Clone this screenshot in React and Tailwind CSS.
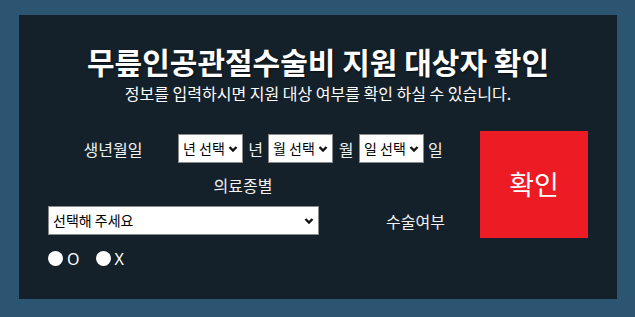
import React, { useState } from 'react';

const Chevron = () => (
    <svg width="10" height="7" viewBox="0 0 10 7" className="pointer-events-none absolute right-[5px] top-1/2 -translate-y-1/2">
        <polyline points="1.5,1.5 5,5 8.5,1.5" fill="none" stroke="#111" strokeWidth="2.4" />
    </svg>
);

const Select = ({ width, value, onChange, options, placeholder }) => (
    <div className={`relative ${width} h-[29px] shrink-0`}>
        <select
            value={value}
            onChange={(e) => onChange(e.target.value)}
            className="w-full h-full appearance-none bg-white text-black text-[14px] pl-[4px] pr-[16px] border border-[#8a8a8a] outline-none rounded-none"
        >
            <option value="">{placeholder}</option>
            {options.map((o) => (
                <option key={o} value={o}>{o}</option>
            ))}
        </select>
        <Chevron />
    </div>
);

const years = Array.from({ length: 60 }, (_, i) => String(2010 - i));
const months = Array.from({ length: 12 }, (_, i) => String(i + 1));
const days = Array.from({ length: 31 }, (_, i) => String(i + 1));

export default function App() {
    const [form, setForm] = useState({ year: '', month: '', day: '', type: '', surgery: '' });

    return (
        <div className="w-[635px] h-[317px] bg-[#2c5572] pt-[15px] pl-[19px] font-['Noto_Sans_CJK_KR','Noto_Sans',sans-serif]">
            <div className="w-[598px] h-[284px] bg-[#14212a] flex flex-col items-center pt-[27px]">
                {/* Title */}
                <h1 className="text-white font-bold text-[30px] leading-[38px] whitespace-nowrap [text-shadow:1px_1px_2px_rgba(0,0,0,0.6)]">
                    무릎인공관절수술비 지원 대상자 확인
                </h1>
                <p className="text-white text-[16px] leading-[20px] mt-[3px]">
                    정보를 입력하시면 지원 대상 여부를 확인 하실 수 있습니다.
                </p>

                {/* Form */}
                <div className="w-full flex mt-[28px] pl-[29px] pr-[29px]">
                    <div className="flex-1 pt-[3px] text-[#f2f2f2] text-[16px]">
                        <div className="flex items-center h-[29px]">
                            <div className="w-[130px] text-center">생년월일</div>
                            <Select width="w-[65px]" value={form.year} onChange={(v) => setForm({ ...form, year: v })} options={years} placeholder="년 선택" />
                            <span className="w-[25px] text-center">년</span>
                            <Select width="w-[65px]" value={form.month} onChange={(v) => setForm({ ...form, month: v })} options={months} placeholder="월 선택" />
                            <span className="w-[26px] text-center">월</span>
                            <Select width="w-[65px]" value={form.day} onChange={(v) => setForm({ ...form, day: v })} options={days} placeholder="일 선택" />
                            <span className="ml-[4px]">일</span>
                        </div>

                        <div className="flex items-center h-[43px]">
                            <div className="ml-[130px] w-[130px] text-center">의료종별</div>
                        </div>

                        <div className="flex items-center h-[29px]">
                            <Select
                                width="w-[271px]"
                                value={form.type}
                                onChange={(v) => setForm({ ...form, type: v })}
                                options={['건강보험', '의료급여 1종', '의료급여 2종', '차상위계층']}
                                placeholder="선택해 주세요"
                            />
                            <span className="ml-[67px]">수술여부</span>
                        </div>

                        <div className="flex items-center mt-[16px] h-[15px] text-white">
                            {['O', 'X'].map((opt) => (
                                <label key={opt} className="flex items-center mr-[16px] cursor-pointer">
                                    <input
                                        type="radio"
                                        name="surgery"
                                        checked={form.surgery === opt}
                                        onChange={() => setForm({ ...form, surgery: opt })}
                                        className={`appearance-none w-[15px] h-[15px] rounded-full bg-white m-0 ${form.surgery === opt ? 'border-[4px] border-[#1a73e8]' : ''}`}
                                    />
                                    <span className="ml-[4px] font-['Noto_Sans',sans-serif] text-[16px] leading-none">{opt}</span>
                                </label>
                            ))}
                        </div>
                    </div>

                    <button
                        type="button"
                        className="w-[108px] h-[107px] bg-[#ed1c24] text-white text-[27px] shrink-0"
                    >
                        확인
                    </button>
                </div>
            </div>
        </div>
    );
}
